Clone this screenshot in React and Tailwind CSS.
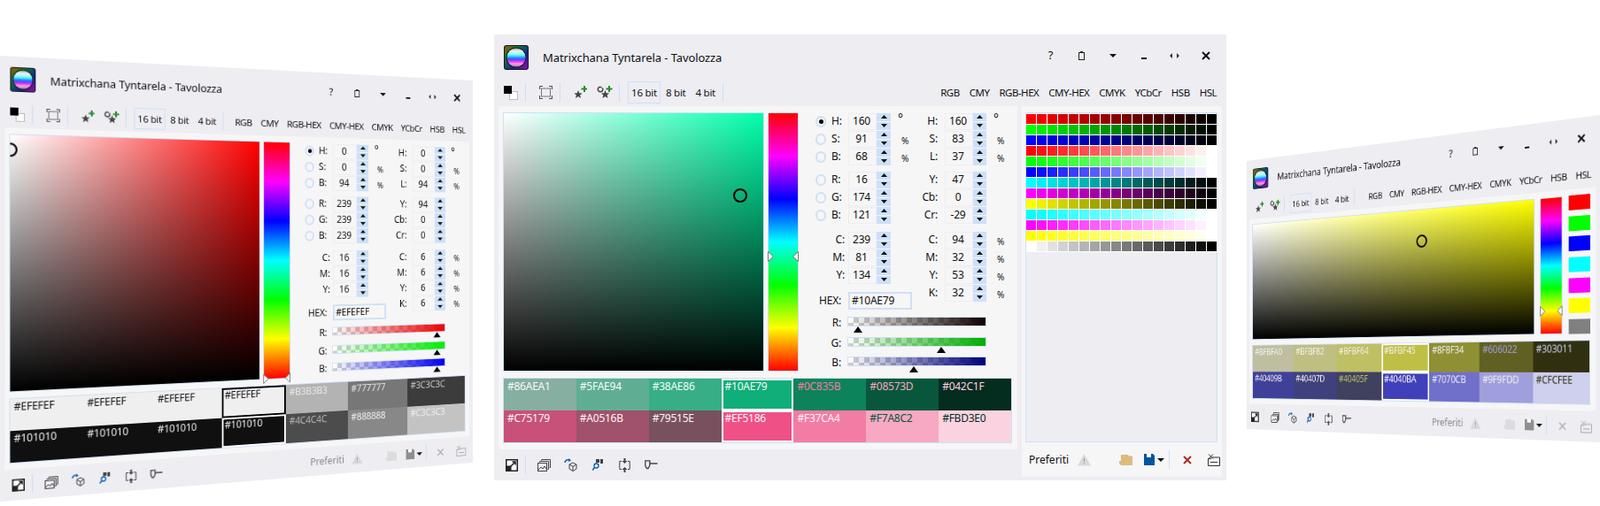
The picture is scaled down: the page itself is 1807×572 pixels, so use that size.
import React from "react";

// maps a w x h box onto four screen corners (tl, tr, br, bl)
const quad = (w, h, [p0, p1, p2, p3]) => {
  const dx1 = p1[0] - p2[0], dx2 = p3[0] - p2[0], sx = p0[0] - p1[0] + p2[0] - p3[0];
  const dy1 = p1[1] - p2[1], dy2 = p3[1] - p2[1], sy = p0[1] - p1[1] + p2[1] - p3[1];
  const den = dx1 * dy2 - dx2 * dy1;
  const g = (sx * dy2 - dx2 * sy) / den, k = (dx1 * sy - sx * dy1) / den;
  const a = p1[0] - p0[0] + g * p1[0], b = p3[0] - p0[0] + k * p3[0];
  const d = p1[1] - p0[1] + g * p1[1], e = p3[1] - p0[1] + k * p3[1];
  return `matrix3d(${a / w},${d / w},0,${g / w},${b / h},${e / h},0,${k / h},0,0,1,0,${p0[0]},${p0[1]},0,1)`;
};

const Logo = () => (
  <svg width="28" height="28" viewBox="0 0 28 28">
    <defs>
      <linearGradient id="frame" x1="0" y1="0" x2="1" y2="1">
        <stop offset="0" stopColor="#a05a00" /><stop offset="0.3" stopColor="#0c7a30" />
        <stop offset="0.65" stopColor="#102a90" /><stop offset="1" stopColor="#9010a0" />
      </linearGradient>
      <linearGradient id="ball" x1="0" y1="0" x2="0" y2="1">
        <stop offset="0" stopColor="#9a9a9a" /><stop offset="0.14" stopColor="#e8f0ee" />
        <stop offset="0.3" stopColor="#a4ffe8" /><stop offset="0.42" stopColor="#30e8ff" />
        <stop offset="0.52" stopColor="#3a78ff" /><stop offset="0.62" stopColor="#4a50ff" />
        <stop offset="0.72" stopColor="#ff30f0" /><stop offset="0.84" stopColor="#ff9cf0" />
        <stop offset="1" stopColor="#8a8a8a" />
      </linearGradient>
    </defs>
    <rect width="28" height="28" rx="3" fill="#1a1420" />
    <rect x="1" y="1" width="26" height="26" rx="2.500" fill="url(#frame)" />
    <circle cx="14" cy="14" r="11.500" fill="#20162a" />
    <circle cx="14" cy="14" r="10.500" fill="url(#ball)" />
  </svg>
);

const ColorToggle = () => (
  <svg width="16" height="16" viewBox="0 0 16 16">
    <rect x="6.500" y="6.500" width="9" height="9" fill="#fff" stroke="#bdbdbd" />
    <rect width="9" height="9" fill="#000" />
  </svg>
);

const SnapIcon = () => (
  <svg width="15" height="15" viewBox="0 0 15 15" fill="none" stroke="#555">
    <path d="M.5 4V.5H4M11 .5h3.500V4M14.500 11v3.500H11M4 14.500H.5V11" strokeWidth="1.200" />
    <rect x="2.500" y="3" width="10" height="9" stroke="#777" />
  </svg>
);

const StarAdd = () => (
  <svg width="15" height="15" viewBox="0 0 15 15">
    <path d="M5 5l1.300 3.200 3.400.2-2.600 2.200.9 3.400L5 12.100 2 14l.9-3.400L.3 8.400l3.400-.2z" fill="#444" />
    <path d="M11 0h2v2.500h2.500v2H13V7h-2V4.500H8.500v-2H11z" fill="#2a8a2a" />
  </svg>
);

const RefreshStar = () => (
  <svg width="18" height="15" viewBox="0 0 18 15">
    <path d="M9.500 5l1.300 3.200 3.400.2-2.600 2.200.9 3.400-3-1.900-3 1.900.9-3.400-2.600-2.200 3.400-.2z" fill="#444" />
    <circle cx="4" cy="4" r="2.800" fill="none" stroke="#444" strokeWidth="1.400" />
    <path d="M4 0h3v3z" fill="#edeef2" />
    <path d="M13 0h2v2.500h2.500v2H15V7h-2V4.500h-2.500v-2H13z" fill="#2a8a2a" />
  </svg>
);

const Clip = () => (
  <svg width="8" height="10" viewBox="0 0 8 10" fill="none" stroke="#222">
    <rect x=".5" y="1.500" width="6" height="8" /><path d="M2 .8h3" strokeWidth="1.500" />
  </svg>
);

const Caret = () => (
  <svg width="8" height="4" viewBox="0 0 8 4"><path d="M0 0h8L4 4z" fill="#111" /></svg>
);

const Arrows = () => (
  <svg width="11" height="6" viewBox="0 0 11 6" fill="#333"><path d="M3 0v6L0 3zM8 0v6l3-3z" /></svg>
);

const CloseIcon = ({ color = "#111", w = 2 }) => (
  <svg width="10" height="10" viewBox="0 0 10 10"><path d="M1 1l8 8M9 1l-8 8" stroke={color} strokeWidth={w} /></svg>
);

const Expand = () => (
  <svg width="14" height="14" viewBox="0 0 14 14">
    <rect width="14" height="14" fill="#222" />
    <rect x="1.500" y="1.500" width="11" height="11" fill="#fff" />
    <rect x="1" y="7.500" width="5.500" height="5.500" fill="#222" />
    <path d="M5.500 8.500L11 3M7.500 3H11v3.500" fill="none" stroke="#222" strokeWidth="1.500" />
  </svg>
);

const Images = () => (
  <svg width="15" height="14" viewBox="0 0 15 14" fill="none" stroke="#444">
    <path d="M4.500 1.500V.5h10v9h-1" /><path d="M2.500 3.500v-1h10v9h-1" />
    <rect x=".5" y="4.500" width="10" height="9" />
    <path d="M1 12l3-3 2 2 2-3 2 3" />
  </svg>
);

const Cube = () => (
  <svg width="15" height="15" viewBox="0 0 15 15" fill="none">
    <path d="M10 5l4 2v5l-4 2.500L6 12V7zM6 7l4 2.500L14 7M10 9.500v5" stroke="#444" />
    <path d="M1 5a3.500 3.500 0 0 1 5-3" stroke="#0a5db0" strokeWidth="1.500" />
    <path d="M5.500 0L8 2.500 5 4z" fill="#0a5db0" />
  </svg>
);

const FindBlocks = () => (
  <svg width="12" height="13" viewBox="0 0 12 13">
    <rect x="4" y="0" width="4" height="4" fill="#444" /><rect x="9" y="0" width="3" height="5" fill="#444" />
    <circle cx="4.500" cy="7.500" r="2.500" fill="none" stroke="#0a5db0" strokeWidth="1.300" />
    <path d="M2.500 9.500L0 12.500" stroke="#0a5db0" strokeWidth="1.500" />
  </svg>
);

const UpDown = () => (
  <svg width="13" height="16" viewBox="0 0 13 16">
    <path d="M3 3.500H.8v9H3M10 3.500h2.200v9H10" fill="none" stroke="#444" />
    <path d="M5.500 0h2v3h2l-3 3-3-3h2zM5.500 16h2v-3h2l-3-3-3 3h2z" fill="#444" />
  </svg>
);

const KeyIcon = () => (
  <svg width="15" height="11" viewBox="0 0 15 11" fill="none" stroke="#444">
    <path d="M.8.8h5v5.500L4 9.500H2.500L.8 6.500z" strokeWidth="1.300" /><path d="M6 4h8.500" strokeWidth="1.500" />
  </svg>
);

const WarnIcon = () => (
  <svg width="15" height="14" viewBox="0 0 15 14">
    <path d="M7.500 0L15 13.500H0z" fill="#d9d9dd" />
    <path d="M7.500 5v4M7.500 10.300v1.400" stroke="#999" />
  </svg>
);

const Folder = ({ color }) => (
  <svg width="15" height="12" viewBox="0 0 15 12"><path d="M2 2V0h8l1 1.500h4V12H2L0 10V7h2z" fill={color} /></svg>
);

const Floppy = ({ color }) => (
  <svg width="12" height="13" viewBox="0 0 12 13">
    <path d="M0 0h10l2 2v11H0z" fill={color} /><rect x="3" y="0" width="5" height="4" fill="#fff" />
    <rect x="2" y="7" width="8" height="6" fill={color} />
  </svg>
);

const BoxX = ({ color }) => (
  <svg width="14" height="14" viewBox="0 0 14 14" fill="none" stroke={color}>
    <path d="M.5 5.500h3l1-1.500h9v9.500H.5zM3 9.500h8" /><path d="M1 .5l5 5M6 .5l-5 5" />
  </svg>
);

const Sep = ({ className }) => <div className={`w-px h-[21px] shrink-0 bg-[#cfdff3] ${className}`} />;

const Spin = ({ w }) => (
  <div className={`flex flex-col h-[19px] gap-px ${w}`}>
    <div className="flex-1 bg-[#cde0f7] flex items-center justify-center">
      <svg width="7" height="4" viewBox="0 0 7 4"><path d="M0 4h7L3.500 0z" fill="#111" /></svg>
    </div>
    <div className="flex-1 bg-[#cde0f7] flex items-center justify-center">
      <svg width="7" height="4" viewBox="0 0 7 4"><path d="M0 0h7L3.500 4z" fill="#111" /></svg>
    </div>
  </div>
);

const Radio = ({ on }) => (
  <div className="w-[13px] h-[13px] rounded-full border-2 border-[#cfe0f6] flex items-center justify-center bg-[#f6f6f7]">
    {on && <div className="w-[5px] h-[5px] rounded-full bg-black" />}
  </div>
);

const NumBox = ({ value }) => (
  <div className="w-[32px] h-[19px] border border-[#eeeef1] flex items-center justify-center pr-[2px]">{value}</div>
);

const Degree = ({ className }) => <span className={`text-[14px] leading-none pb-[6px] ${className}`}>°</span>;
const Percent = ({ className }) => <span className={`text-[10px] leading-none pt-[4px] ${className}`}>%</span>;

const LeftRow = ({ label, value, radio, on, unit }) => (
  <div className="flex items-center h-5">
    {radio ? (
      <>
        <div className="w-[12px] mr-[6px] flex justify-center"><Radio on={on} /></div>
        <span className="w-[19px]">{label}:</span>
      </>
    ) : (
      <span className="w-[37px] pr-[4px] text-right">{label}:</span>
    )}
    <NumBox value={value} />
    <Spin w="w-[16px]" />
    {unit === "deg" && <Degree className="ml-[8px]" />}
    {unit === "pct" && <Percent className="ml-[12px]" />}
  </div>
);

const RightRow = ({ label, value, unit }) => (
  <div className="flex items-center h-5">
    <span className="w-[26px] pr-[8px] text-right">{label}:</span>
    <NumBox value={value} />
    <Spin w="w-[15px]" />
    {unit === "deg" && <Degree className="ml-[8px]" />}
    {unit === "pct" && <Percent className="ml-[12px]" />}
  </div>
);

const Slider = ({ label, value, track }) => (
  <div className="flex h-[22.5px] items-start">
    <span className="w-[36px] pr-[7px] text-right leading-[14px]">{label}:</span>
    <div className="relative">
      <div className={`w-[157px] h-[11px] border border-[#cfe0f6] ${track}`} />
      {/* thumb sits under the bar */}
      <div className="absolute top-[11px] w-0 h-0 border-x-[5px] border-x-transparent border-b-[7px] border-b-black" style={{ left: value * 0.6 - 3 }} />
    </div>
  </div>
);

const Fields = ({ v }) => (
  <div className="ml-[19px] tracking-[-0.2px]">
    <div className="flex">
      <div className="w-[120px]">
        <LeftRow label="H" value={v.hsb[0]} radio on unit="deg" />
        <LeftRow label="S" value={v.hsb[1]} radio unit="pct" />
        <LeftRow label="B" value={v.hsb[2]} radio unit="pct" />
        <div className="mt-[6px]">
          <LeftRow label="R" value={v.rgb[0]} radio />
          <LeftRow label="G" value={v.rgb[1]} radio />
          <LeftRow label="B" value={v.rgb[2]} radio />
        </div>
        <div className="mt-[8px]">
          <LeftRow label="C" value={v.cmy[0]} />
          <LeftRow label="M" value={v.cmy[1]} />
          <LeftRow label="Y" value={v.cmy[2]} />
        </div>
        <div className="flex items-center mt-[9px]">
          <span className="w-[29px] text-right whitespace-nowrap">HEX:</span>
          <div className="ml-[8px] w-[72px] h-5 border-2 border-[#cfe0f6] flex items-center pl-[2px]">{v.hex}</div>
        </div>
      </div>
      <div>
        <RightRow label="H" value={v.hsl[0]} unit="deg" />
        <RightRow label="S" value={v.hsl[1]} unit="pct" />
        <RightRow label="L" value={v.hsl[2]} unit="pct" />
        <div className="mt-[6px]">
          <RightRow label="Y" value={v.ycc[0]} />
          <RightRow label="Cb" value={v.ycc[1]} />
          <RightRow label="Cr" value={v.ycc[2]} />
        </div>
        <div className="mt-[8px]">
          <RightRow label="C" value={v.cmyk[0]} unit="pct" />
          <RightRow label="M" value={v.cmyk[1]} unit="pct" />
          <RightRow label="Y" value={v.cmyk[2]} unit="pct" />
          <RightRow label="K" value={v.cmyk[3]} unit="pct" />
        </div>
      </div>
    </div>
    <div className="mt-[8px]">
      <Slider label="R" value={v.rgb[0]} track={v.tracks[0]} />
      <Slider label="G" value={v.rgb[1]} track={v.tracks[1]} />
      <Slider label="B" value={v.rgb[2]} track={v.tracks[2]} />
    </div>
  </div>
);

const HueMark = ({ side }) => (
  <svg width="7" height="12" viewBox="0 0 7 12" className={`absolute -translate-y-1/2 ${side}`}>
    <path d="M.5.5L6.500 6 .5 11.500z" fill="#fff" stroke="#777" />
  </svg>
);

const Picker = ({ size, gradient, s, b }) => (
  <div className={`relative overflow-hidden border border-[#cfe0f6] ${size} ${gradient}`}>
    <div
      className="absolute w-[16px] h-[16px] -ml-2 -mt-2 rounded-full border-2 border-black"
      style={{ left: `${s}%`, top: `${100 - b}%` }}
    />
  </div>
);

const Spectrum = ({ size, hue }) => (
  <div className={`relative border border-[#cfe0f6] bg-[linear-gradient(to_bottom,#ff0000,#ff00ff,#0000ff,#00ffff,#00ff00,#ffff00,#ff0000)] ${size}`}>
    <div className="absolute inset-x-0" style={{ top: `${(1 - hue / 360) * 100}%` }}>
      <HueMark side="-left-px" />
      <HueMark side="-right-px rotate-180" />
    </div>
  </div>
);

const Swatches = ({ rows, size }) => (
  <div className={`border border-[#cfe0f6] tracking-[-0.25px] ${size}`}>
    {rows.map((row, i) => (
      <div key={i} className="grid grid-cols-7 flex-1 h-1/2">
        {row.map(([bg, fg, selected], j) => (
          <div
            key={j}
            className={`overflow-hidden ${selected ? `border-2 pl-[2px] leading-[13px] ${selected}` : "pl-[4px] leading-[17px]"}`}
            style={{ backgroundColor: bg, color: fg }}
          >
            {bg}
          </div>
        ))}
      </div>
    ))}
  </div>
);

const PALETTE = [
  ["#ff0000", "#000000"], ["#00ff00", "#000000"], ["#0000ff", "#000000"],
  ["#ff0000", "#ffffff"], ["#00ff00", "#ffffff"], ["#0000ff", "#ffffff"],
  ["#00ffff", "#000000"], ["#ff00ff", "#000000"], ["#ffff00", "#000000"],
  ["#00ffff", "#ffffff"], ["#ff00ff", "#ffffff"], ["#ffff00", "#ffffff"],
  ["#ffffff", "#000000"],
];

const mix = (a, b, t) => {
  const ch = (c, i) => parseInt(c.slice(1 + i * 2, 3 + i * 2), 16);
  return `rgb(${[0, 1, 2].map((i) => Math.round(ch(a, i) + (ch(b, i) - ch(a, i)) * t)).join(",")})`;
};

const FavList = () => (
  <div className="grid grid-cols-[repeat(18,12px)] auto-rows-[12px] w-max">
    {PALETTE.flatMap(([from, to], r) =>
      Array.from({ length: 18 }, (_, i) => (
        <div key={`${r}-${i}`} className="border-r border-b border-white" style={{ backgroundColor: mix(from, to, i / 17) }} />
      ))
    )}
  </div>
);

const TitleBar = () => (
  <div className="flex items-center h-[52px] pl-[11px] pr-[6px]">
    <Logo />
    <span className="ml-[16px] pt-px text-[13px] tracking-[-0.1px]">Matrixchana Tyntarela - Tavolozza</span>
    <div className="ml-auto flex items-center mb-[5px]">
      <div className="w-[35px] flex justify-center text-[13px]">?</div>
      <div className="w-[35px] flex justify-center"><Clip /></div>
      <div className="w-[35px] flex justify-center"><Caret /></div>
      <div className="w-[35px] flex justify-center pt-[6px]"><div className="w-[6px] h-[2px] bg-[#111]" /></div>
      <div className="w-[35px] flex justify-center"><Arrows /></div>
      <div className="w-[35px] flex justify-center"><CloseIcon /></div>
    </div>
  </div>
);

const MODES = ["RGB", "CMY", "RGB-HEX", "CMY-HEX", "CMYK", "YCbCr", "HSB", "HSL"];

const ToolRow = ({ compact }) => (
  <div className="flex items-center h-[29px] pr-[11px] pb-[2px] whitespace-nowrap text-[11.5px] tracking-[-0.25px]">
    {!compact && (
      <>
        <div className="ml-[11px]"><ColorToggle /></div>
        <Sep className="ml-[8px]" />
        <div className="ml-[15px]"><SnapIcon /></div>
        <Sep className="ml-[8px]" />
      </>
    )}
    <div className={compact ? "ml-[16px]" : "ml-[15px]"}><StarAdd /></div>
    <div className="ml-[11px]"><RefreshStar /></div>
    <Sep className="ml-[7px]" />
    <div className="ml-[9px] w-[37px] h-[25px] border border-[#cfe0f6] flex items-center justify-center">16 bit</div>
    <span className="ml-[6px]">8 bit</span>
    <span className="ml-[11px]">4 bit</span>
    <Sep className="ml-[8px]" />
    <div className="ml-auto flex gap-[11px] tracking-[-0.5px]">
      {MODES.map((m) => <span key={m}>{m}</span>)}
    </div>
  </div>
);

const LeftTools = () => (
  <div className="flex items-center">
    <div className="ml-[8px]"><Expand /></div>
    <Sep className="ml-[8px]" />
    <div className="ml-[13px]"><Images /></div>
    <div className="ml-[15px]"><Cube /></div>
    <div className="ml-[17px]"><FindBlocks /></div>
    <div className="ml-[18px]"><UpDown /></div>
    <div className="ml-[16px]"><KeyIcon /></div>
  </div>
);

const FavBar = ({ dim, className = "" }) => (
  <div className={`flex items-center ${dim ? "text-[#888]" : ""} ${className}`}>
    <span>Preferiti</span>
    <div className="ml-[10px]"><WarnIcon /></div>
    <div className="ml-[32px]"><Folder color={dim ? "#dcdcde" : "#dfba7d"} /></div>
    <div className="ml-[13px]"><Floppy color={dim ? "#8f8f8f" : "#00549f"} /></div>
    <div className="ml-[3px]"><Caret /></div>
    <Sep className="ml-[5px]" />
    <div className="ml-[15px]"><CloseIcon color={dim ? "#a8a8a8" : "#a5301e"} w={dim ? 1.3 : 2} /></div>
    <div className="ml-[18px]"><BoxX color={dim ? "#a8a8a8" : "#333"} /></div>
  </div>
);

const Main = ({ v, rows, gradient, s, b, hue }) => (
  <div className="w-[586px] h-[388px] bg-[#f6f6f7] pl-[5px] pt-[7px]">
    <div className="flex h-[293px]">
      <Picker size="w-[295px] h-[293px]" gradient={gradient} s={s} b={b} />
      <Spectrum size="ml-[4px] w-[35px] h-[293px]" hue={hue} />
      <Fields v={v} />
    </div>
    <Swatches rows={rows} size="mt-[7px] w-[575px] h-[74px]" />
  </div>
);

const Wall = ({ corners, w, h, children }) => (
  <div
    className="absolute left-0 top-0 bg-[#ededf2] origin-top-left blur-[0.3px]"
    style={{ width: w, height: h, transform: quad(w, h, corners) }}
  >
    {children}
  </div>
);

const GREEN_ROWS = [
  [["#86AEA1", "#f4fbf8"], ["#5FAE94", "#f4fbf8"], ["#38AE86", "#f4fbf8"], ["#10AE79", "#f4fbf8", "border-white"], ["#0C835B", "#F37CA4"], ["#08573D", "#F7A8C2"], ["#042C1F", "#FBD3E0"]],
  [["#C75179", "#fff4f4"], ["#A0516B", "#fff4f4"], ["#79515E", "#fff4f4"], ["#EF5186", "#fff4f4", "border-white"], ["#F37CA4", "#fff4f4"], ["#F7A8C2", "#08573D"], ["#FBD3E0", "#042C1F"]],
];

const GREY_ROWS = [
  [["#EFEFEF", "#101010"], ["#EFEFEF", "#101010"], ["#EFEFEF", "#101010"], ["#EFEFEF", "#101010", "border-black"], ["#B3B3B3", "#e8e8e8"], ["#777777", "#e4e4e4"], ["#3C3C3C", "#C3C3C3"]],
  [["#101010", "#EFEFEF"], ["#101010", "#EFEFEF"], ["#101010", "#EFEFEF"], ["#101010", "#EFEFEF", "border-white"], ["#4C4C4C", "#B3B3B3"], ["#888888", "#eeeeee"], ["#C3C3C3", "#eeeeee"]],
];

const YELLOW_ROWS = [
  [["#BFBFA0", "#f0f0f0"], ["#BFBF82", "#f0f0f0"], ["#BFBF64", "#f0f0f0"], ["#BFBF45", "#f0f0f0", "border-white"], ["#8F8F34", "#f0f0f0"], ["#606022", "#9F9FDD"], ["#303011", "#CFCFEE"]],
  [["#40409B", "#f0f0f0"], ["#40407D", "#f0f0f0"], ["#40405F", "#BFBF64"], ["#4040BA", "#f0f0f0", "border-white"], ["#7070CB", "#f0f0f0"], ["#9F9FDD", "#f0f0f0"], ["#CFCFEE", "#303011"]],
];

const GREEN_VALUES = {
  hsb: [160, 91, 68], rgb: [16, 174, 121], cmy: [239, 81, 134],
  hsl: [160, 83, 37], ycc: [47, 0, -29], cmyk: [94, 32, 53, 32], hex: "#10AE79",
  tracks: [
    "bg-[linear-gradient(to_right,transparent,#100000),repeating-conic-gradient(#cfcfcf_0_25%,#ffffff_0_50%)] [background-size:100%_100%,12px_12px]",
    "bg-[linear-gradient(to_right,transparent,#00ae00),repeating-conic-gradient(#cfcfcf_0_25%,#ffffff_0_50%)] [background-size:100%_100%,12px_12px]",
    "bg-[linear-gradient(to_right,transparent,#000079),repeating-conic-gradient(#cfcfcf_0_25%,#ffffff_0_50%)] [background-size:100%_100%,12px_12px]",
  ],
};

const GREY_VALUES = {
  hsb: [0, 0, 94], rgb: [239, 239, 239], cmy: [16, 16, 16],
  hsl: [0, 0, 94], ycc: [94, 0, 0], cmyk: [6, 6, 6, 6], hex: "#EFEFEF",
  tracks: [
    "bg-[linear-gradient(to_right,transparent,#ef0000),repeating-conic-gradient(#cfcfcf_0_25%,#ffffff_0_50%)] [background-size:100%_100%,12px_12px]",
    "bg-[linear-gradient(to_right,transparent,#00ef00),repeating-conic-gradient(#cfcfcf_0_25%,#ffffff_0_50%)] [background-size:100%_100%,12px_12px]",
    "bg-[linear-gradient(to_right,transparent,#0000ef),repeating-conic-gradient(#cfcfcf_0_25%,#ffffff_0_50%)] [background-size:100%_100%,12px_12px]",
  ],
};

const QUICK = ["#ff0000", "#00ff00", "#0000ff", "#00ffff", "#ff00ff", "#ffff00", "#808080"];

export default function App() {
  return (
    <div className="relative w-[1807px] h-[572px] overflow-hidden bg-white text-[#111] text-[12px] [font-family:'Noto_Sans',sans-serif]">
      {/* left window */}
      <Wall w={596} h={504} corners={[[0, 63], [534, 91], [534, 523], [0, 567]]}>
        <TitleBar />
        <ToolRow />
        <div className="pl-[5px]">
          <Main v={GREY_VALUES} rows={GREY_ROWS} gradient="bg-[linear-gradient(to_top,#000000,transparent),linear-gradient(to_right,#ffffff,#ff0000)]" s={0} b={94} hue={0} />
          <div className="flex items-center h-[35px] pr-[10px]">
            <LeftTools />
            <FavBar dim className="ml-auto" />
          </div>
        </div>
      </Wall>

      {/* centre window */}
      <div className="absolute left-[558px] top-[39px] w-[827px] h-[504px] bg-[#ededf2]">
        <TitleBar />
        <ToolRow />
        <div className="flex pl-[5px] gap-[5px]">
          <div>
            <Main v={GREEN_VALUES} rows={GREEN_ROWS} gradient="bg-[linear-gradient(to_top,#000000,transparent),linear-gradient(to_right,#ffffff,#00ffaa)]" s={91} b={68} hue={160} />
            <div className="flex items-center h-[35px]"><LeftTools /></div>
          </div>
          <div className="w-[226px] h-[419px] bg-[#f6f6f7] pt-[7px] pl-[4px]">
            <div className="w-[217px] h-[373px] border border-[#cfe0f6] bg-[#ededf2] pt-px">
              <FavList />
            </div>
            <FavBar className="h-[39px] pl-[4px]" />
          </div>
        </div>
      </div>

      {/* right window, compact layout */}
      <Wall w={530} h={370} corners={[[1408, 182], [1807, 130], [1807, 500], [1408, 485]]}>
        <TitleBar />
        <ToolRow compact />
        <div className="mx-[5px] h-[254px] bg-[#f6f6f7] pl-[5px] pt-[7px] pr-[7px]">
          <div className="flex h-[159px]">
            <Picker size="w-[437px] h-[159px]" gradient="bg-[linear-gradient(to_top,#000000,transparent),linear-gradient(to_right,#ffffff,#ffff00)]" s={64} b={75} />
            <Spectrum size="ml-[7px] w-[29px] h-[159px]" hue={60} />
            <div className="ml-[8px] w-[27px] flex flex-col justify-between">
              {QUICK.map((c) => <div key={c} className="h-[17px]" style={{ backgroundColor: c }} />)}
            </div>
          </div>
          <Swatches rows={YELLOW_ROWS} size="mt-[7px] h-[74px]" />
        </div>
        <div className="flex items-center h-[35px] pr-[10px]">
          <LeftTools />
          <FavBar dim className="ml-auto" />
        </div>
      </Wall>
    </div>
  );
}
